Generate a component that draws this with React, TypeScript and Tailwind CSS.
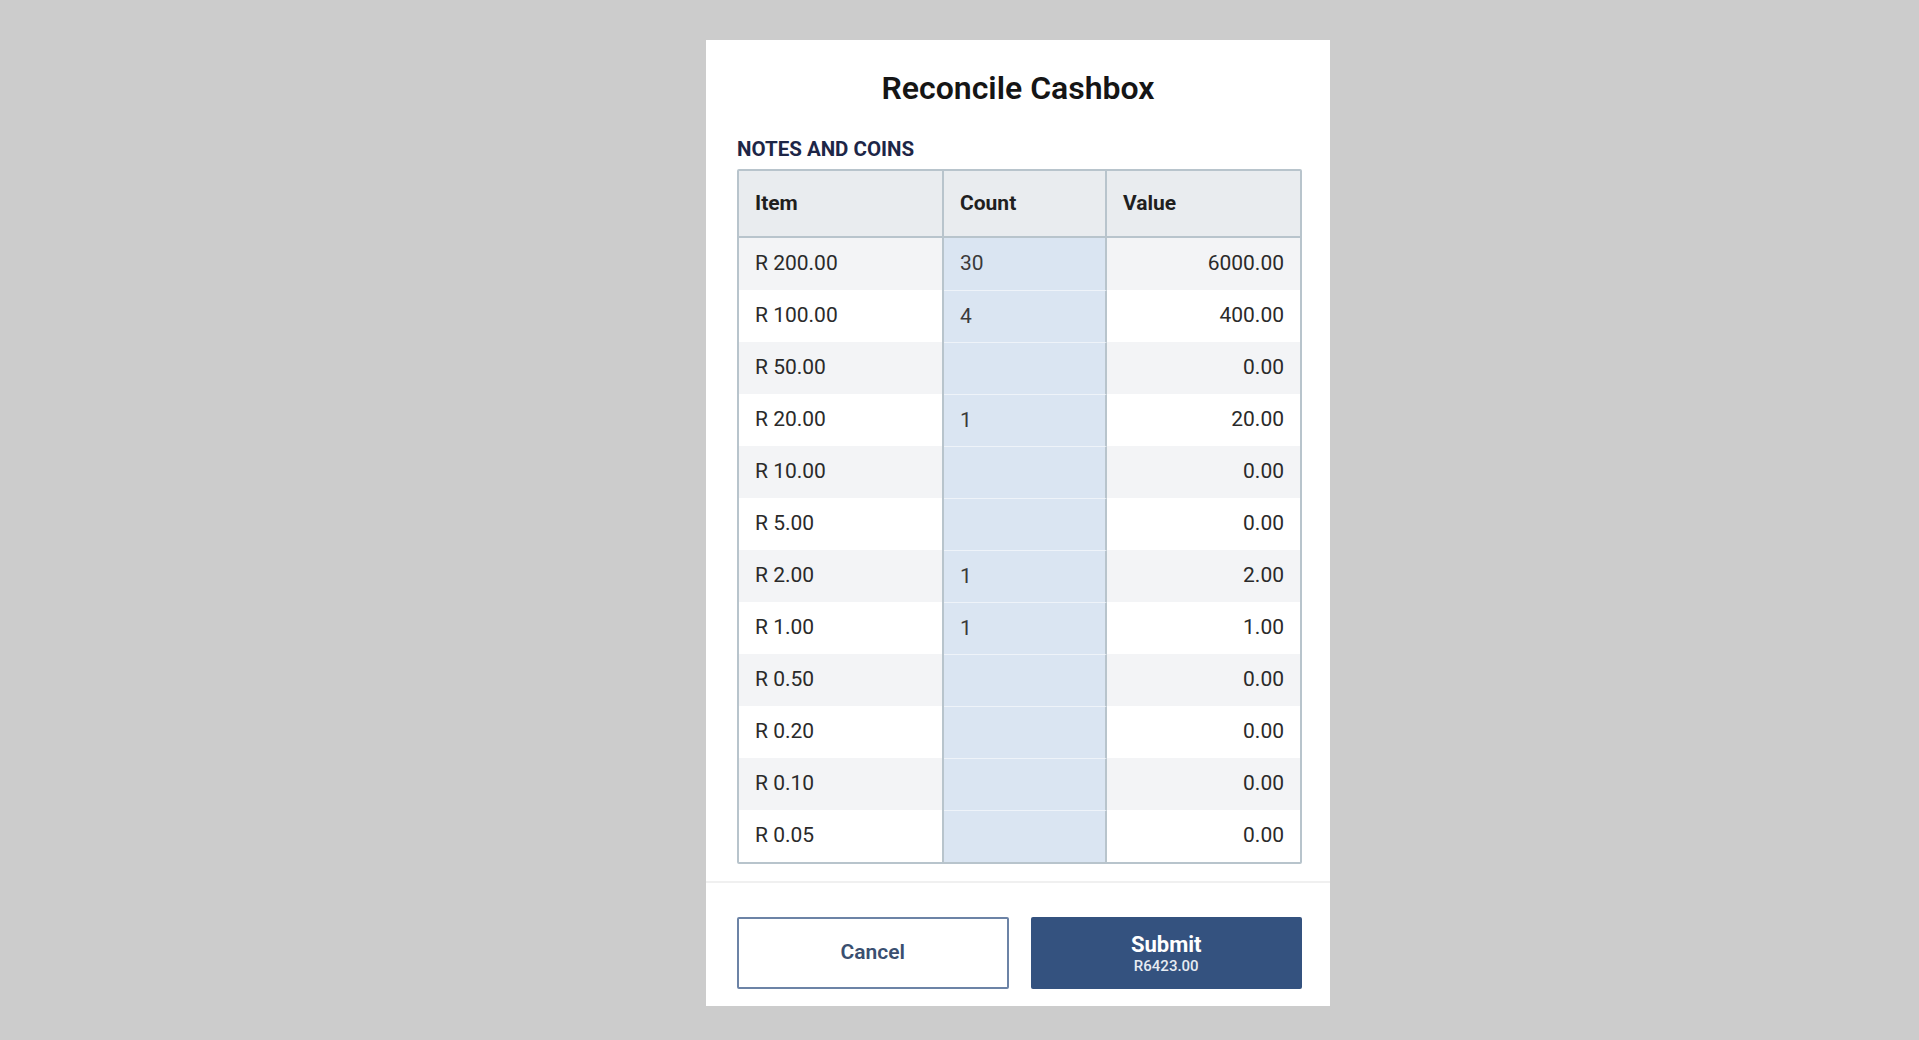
import React from 'react';

const rows = [
  { item: 'R 200.00', count: '30', value: '6000.00' },
  { item: 'R 100.00', count: '4', value: '400.00' },
  { item: 'R 50.00', count: '', value: '0.00' },
  { item: 'R 20.00', count: '1', value: '20.00' },
  { item: 'R 10.00', count: '', value: '0.00' },
  { item: 'R 5.00', count: '', value: '0.00' },
  { item: 'R 2.00', count: '1', value: '2.00' },
  { item: 'R 1.00', count: '1', value: '1.00' },
  { item: 'R 0.50', count: '', value: '0.00' },
  { item: 'R 0.20', count: '', value: '0.00' },
  { item: 'R 0.10', count: '', value: '0.00' },
  { item: 'R 0.05', count: '', value: '0.00' },
];

export default function App() {
  return (
    <div className="min-h-screen w-full bg-[#cccccc] flex justify-center pl-[117px] pt-[40px] font-['Roboto',sans-serif]">
      <div className="w-[624px] h-[966px] bg-white flex flex-col">
        <h1 className="pt-[30px] text-center text-[32px] leading-[36px] font-semibold text-[#151515]">
          Reconcile Cashbox
        </h1>

        <div className="pl-[31px] pr-[28px] mt-[31px]">
          <div className="text-[20.5px] leading-[24px] font-bold text-[#1d2647] uppercase">Notes and coins</div>

          <div className="mt-[8px] border-2 border-[#b8c4cc] rounded-[2px] overflow-hidden">
            <div className="grid grid-cols-[205px_163px_1fr] h-[67px] bg-[#e9ecef] border-b-2 border-[#b8c4cc] text-[21px] font-bold text-[#1f1f1f]">
              <div className="flex items-center px-[16px] border-r-2 border-[#b8c4cc]">Item</div>
              <div className="flex items-center px-[16px] border-r-2 border-[#b8c4cc]">Count</div>
              <div className="flex items-center px-[16px]">Value</div>
            </div>

            {rows.map((r, i) => (
              <div
                key={r.item}
                className={`grid grid-cols-[205px_163px_1fr] h-[52px] text-[21px] text-[#2a2a2a] ${i % 2 === 0 ? 'bg-[#f3f4f6]' : 'bg-white'}`}
              >
                <div className="flex items-center px-[16px] border-r-2 border-[#b8c4cc]">{r.item}</div>
                <div className={`flex items-center px-[16px] border-r-2 border-[#b8c4cc] bg-[#dae5f2] text-[#3a3a3a] ${i > 0 ? 'border-t border-t-[#eef3f9]' : ''}`}>
                  {r.count}
                </div>
                <div className="flex items-center justify-end px-[16px]">{r.value}</div>
              </div>
            ))}
          </div>
        </div>

        <div className="mt-[17px] h-[2px] bg-[#f0f0f0]" />

        <div className="pl-[31px] pr-[28px] mt-[34px] grid grid-cols-2 gap-[22px]">
          <button className="h-[72px] border-2 border-[#6c83a6] rounded-[2px] bg-white text-[21px] font-semibold text-[#3a4f70]">
            Cancel
          </button>
          <button className="h-[72px] rounded-[2px] bg-[#34527f] text-white flex flex-col items-center justify-center">
            <span className="text-[22px] leading-[26px] font-bold">Submit</span>
            <span className="text-[15px] leading-[17px] font-medium text-[#e6ebf2]">R6423.00</span>
          </button>
        </div>
      </div>
    </div>
  );
}
